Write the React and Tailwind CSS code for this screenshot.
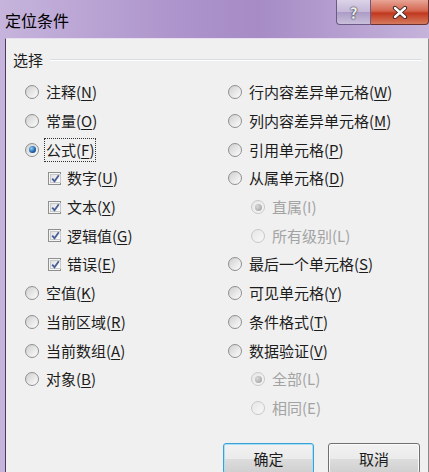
import React from 'react'

const FONT = { fontFamily: '"Noto Sans CJK SC", "Microsoft YaHei", sans-serif' }

// left column of options
const leftItems = [
  { type: 'radio', label: '注释', key: 'N' },
  { type: 'radio', label: '常量', key: 'O' },
  { type: 'radio', label: '公式', key: 'F', checked: true, focus: true },
  { type: 'check', label: '数字', key: 'U', checked: true, indent: true },
  { type: 'check', label: '文本', key: 'X', checked: true, indent: true },
  { type: 'check', label: '逻辑值', key: 'G', checked: true, indent: true },
  { type: 'check', label: '错误', key: 'E', checked: true, indent: true },
  { type: 'radio', label: '空值', key: 'K' },
  { type: 'radio', label: '当前区域', key: 'R' },
  { type: 'radio', label: '当前数组', key: 'A' },
  { type: 'radio', label: '对象', key: 'B' },
]

const rightItems = [
  { type: 'radio', label: '行内容差异单元格', key: 'W' },
  { type: 'radio', label: '列内容差异单元格', key: 'M' },
  { type: 'radio', label: '引用单元格', key: 'P' },
  { type: 'radio', label: '从属单元格', key: 'D' },
  { type: 'radio', label: '直属', key: 'I', indent: true, disabled: true, checked: true },
  { type: 'radio', label: '所有级别', key: 'L', indent: true, disabled: true },
  { type: 'radio', label: '最后一个单元格', key: 'S' },
  { type: 'radio', label: '可见单元格', key: 'Y' },
  { type: 'radio', label: '条件格式', key: 'T' },
  { type: 'radio', label: '数据验证', key: 'V' },
  { type: 'radio', label: '全部', key: 'L', indent: true, disabled: true, checked: true },
  { type: 'radio', label: '相同', key: 'E', indent: true, disabled: true },
]

const Radio = ({ checked, disabled }) => (
  <span
    className={`w-[14px] h-[14px] rounded-full border flex items-center justify-center shrink-0 ${
      disabled
        ? 'border-[#c8c8c8] bg-[linear-gradient(135deg,#e6e6e6,#f8f8f8)]'
        : 'border-[#8f8f8f] bg-[linear-gradient(135deg,#cfcfcf,#fdfdfd)]'
    }`}
  >
    {checked && (
      <span
        className={`w-[7px] h-[7px] rounded-full ${
          disabled
            ? 'bg-[radial-gradient(circle_at_35%_35%,#d8d8d8,#9a9a9a)]'
            : 'bg-[radial-gradient(circle_at_35%_35%,#8fd0f5,#1d5fa8_60%,#0e3565)]'
        }`}
      />
    )}
  </span>
)

const Check = ({ checked }) => (
  <span className="w-[13px] h-[13px] border border-[#8e8f8f] bg-[#f4f4f4] p-[1px] shrink-0 flex">
    <span className="flex-1 border border-[#c9c9c9] bg-[linear-gradient(135deg,#e0e0e0,#ffffff)] flex items-center justify-center">
      {checked && (
        <svg width="9" height="9" viewBox="0 0 9 9">
          <path d="M1.2 4.6 L3.5 7.2 L7.8 1.2" fill="none" stroke="#4a5e97" strokeWidth="1.8" />
        </svg>
      )}
    </span>
  </span>
)

const Option = ({ item }) => (
  <div className={`h-[28.7px] flex items-center ${item.indent ? 'pl-[23px]' : ''} ${item.type === 'check' ? 'gap-[6px]' : 'gap-[7px]'}`}>
    {item.type === 'radio' ? <Radio checked={item.checked} disabled={item.disabled} /> : <Check checked={item.checked} />}
    <span
      className={`text-[15px] leading-[20px] whitespace-nowrap ${item.disabled ? 'text-[#a3a3a3]' : 'text-[#1c1c1c]'} ${
        item.focus ? 'outline-1 outline-dotted outline-[#333] outline-offset-[1px]' : ''
      }`}
    >
      {item.label}(<span className={item.disabled ? '' : 'underline underline-offset-2'}>{item.key}</span>)
    </span>
  </div>
)

const DialogButton = ({ children, focused }) => (
  <button
    className={`h-[31px] rounded-[3px] border text-[15px] text-[#1c1c1c] bg-[linear-gradient(#f2f2f2,#ebebeb_50%,#dddddd_51%,#cfcfcf)] ${
      focused ? 'w-[91px] border-[#3c9fd6] shadow-[inset_0_0_0_1px_#a6e0f7]' : 'w-[92px] border-[#707070] shadow-[inset_0_0_0_1px_#fbfbfb]'
    }`}
  >
    {children}
  </button>
)

export default function App() {
  return (
    <div style={FONT} className="w-[429px] h-[472px] overflow-hidden flex flex-col bg-[linear-gradient(90deg,#c6b4dc,#ae95cc_40%,#a68bc5_60%,#c5b3db)]">
      {/* title bar */}
      <div className="h-[38px] flex items-start shrink-0">
        <div className="pl-[5px] pt-[9px] text-[16px] leading-[22px] text-black">定位条件</div>
        <div className="ml-auto flex">
          <div className="w-[35px] h-[25px] rounded-bl-[4px] border border-t-0 border-[#6b5a86] bg-[linear-gradient(#dcd3e8,#c4b7d8_50%,#ab9cc6_51%,#c9bfdb)] flex items-center justify-center">
            <span className="text-[15px] font-bold leading-none text-[#eee] [text-shadow:0_0_2px_#333,0_0_1px_#333]">?</span>
          </div>
          <div className="w-[58px] h-[25px] rounded-br-[4px] border border-t-0 border-l-0 border-[#6b3030] bg-[linear-gradient(#e8a596,#d4664f_45%,#c1391f_55%,#d67a5d)] flex items-center justify-center">
            <svg width="16" height="13" viewBox="0 0 16 13">
              <path d="M3 2 L13 11 M13 2 L3 11" stroke="#3a2020" strokeWidth="4.2" strokeLinecap="round" />
              <path d="M3 2 L13 11 M13 2 L3 11" stroke="#ffffff" strokeWidth="2.4" strokeLinecap="round" />
            </svg>
          </div>
        </div>
      </div>

      {/* dialog client area */}
      <div className="flex-1 ml-[5px] bg-[#f0f0f0] border-l border-t border-r border-l-[#4a3b5c] border-t-[#e8e0f0] border-r-[#8a8a8a]">
        <div className="flex items-center pl-[7px] pt-[10px] h-[32px]">
          <span className="text-[15px] leading-[20px] text-[#1c1c1c]">选择</span>
          <div className="flex-1 ml-[7px] mr-[6px] h-[2px] border-t border-[#d5dfe5] border-b border-b-white" />
        </div>

        <div className="flex mt-[7px]">
          <div className="w-[222px] pl-[19px] flex flex-col">
            {leftItems.map((item, i) => (
              <Option key={i} item={item} />
            ))}
          </div>
          <div className="flex flex-col">
            {rightItems.map((item, i) => (
              <Option key={i} item={item} />
            ))}
          </div>
        </div>

        <div className="flex gap-[14px] ml-[217px] mt-[21px]">
          <DialogButton focused>确定</DialogButton>
          <DialogButton>取消</DialogButton>
        </div>
      </div>
    </div>
  )
}
